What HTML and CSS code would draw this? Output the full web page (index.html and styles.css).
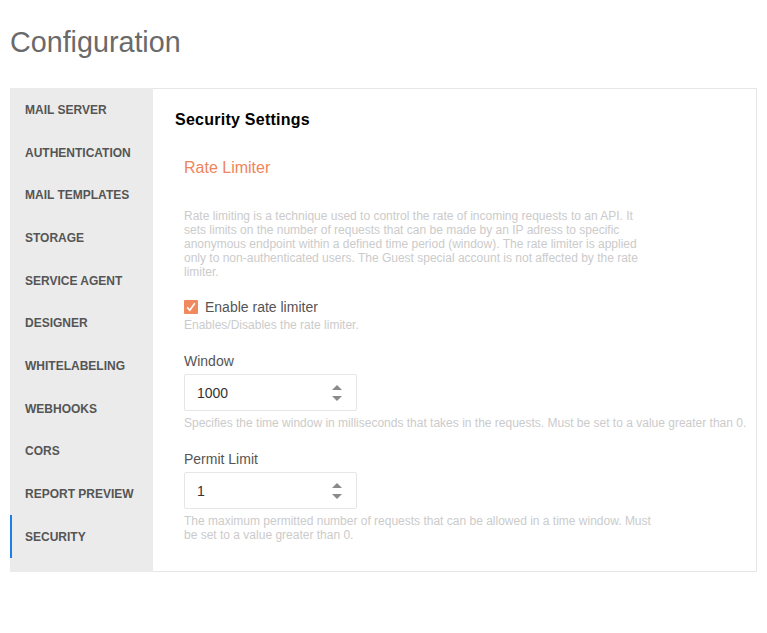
FILE: index.html
```html
<!DOCTYPE html>
<html>
<head>
<meta charset="utf-8">
<link rel="stylesheet" href="styles.css">
</head>
<body>
<h1 class="page-title">Configuration</h1>
<div class="panel">
  <nav class="sidebar">
    <div class="nav-item">MAIL SERVER</div>
    <div class="nav-item">AUTHENTICATION</div>
    <div class="nav-item">MAIL TEMPLATES</div>
    <div class="nav-item">STORAGE</div>
    <div class="nav-item">SERVICE AGENT</div>
    <div class="nav-item">DESIGNER</div>
    <div class="nav-item">WHITELABELING</div>
    <div class="nav-item">WEBHOOKS</div>
    <div class="nav-item">CORS</div>
    <div class="nav-item">REPORT PREVIEW</div>
    <div class="nav-item active">SECURITY</div>
  </nav>
  <main class="content">
    <h2 class="section-title">Security Settings</h2>
    <div class="group">
      <h3 class="group-title">Rate Limiter</h3>
      <p class="desc">Rate limiting is a technique used to control the rate of incoming requests to an API. It sets limits on the number of requests that can be made by an IP adress to specific anonymous endpoint within a defined time period (window). The rate limiter is applied only to non-authenticated users. The Guest special account is not affected by the rate limiter.</p>
      <label class="check-row">
        <svg class="checkbox" width="14" height="14" viewBox="0 0 14 14"><rect x="0" y="0" width="14" height="14" rx="1" fill="#f08a5e"/><path d="M3.2 7.4 L5.8 10.2 L10.8 3.2" fill="none" stroke="#fff" stroke-width="1.6"/></svg>
        <span class="check-label">Enable rate limiter</span>
      </label>
      <div class="help help-check">Enables/Disables the rate limiter.</div>

      <div class="field-label">Window</div>
      <div class="num-input">
        <span class="num-value">1000</span>
        <svg class="spin" width="12" height="20" viewBox="0 0 12 20"><path d="M1 7 L6 2 L11 7 Z" fill="#8a8a8a"/><path d="M1 13 L11 13 L6 18 Z" fill="#8a8a8a"/></svg>
      </div>
      <div class="help">Specifies the time window in milliseconds that takes in the requests. Must be set to a value greater than 0.</div>

      <div class="field-label">Permit Limit</div>
      <div class="num-input">
        <span class="num-value">1</span>
        <svg class="spin" width="12" height="20" viewBox="0 0 12 20"><path d="M1 7 L6 2 L11 7 Z" fill="#8a8a8a"/><path d="M1 13 L11 13 L6 18 Z" fill="#8a8a8a"/></svg>
      </div>
      <div class="help help-narrow">The maximum permitted number of requests that can be allowed in a time window. Must be set to a value greater than 0.</div>
    </div>
  </main>
</div>
</body>
</html>
```
FILE: styles.css
```css
* { box-sizing: border-box; }
body {
  margin: 0;
  padding: 0 10px;
  font-family: "Liberation Sans", Arial, sans-serif;
  background: #fff;
}
.page-title {
  margin: 26px 0 30px 0;
  font-size: 28.7px;
  font-weight: normal;
  color: #6a6a6a;
  line-height: 32px;
}
.panel {
  display: flex;
  width: 747px;
  border: 1px solid #e6e6e6;
  border-left: none;
  border-right: 1px solid #e6e6e6;
}
.sidebar {
  width: 143px;
  background: #ebebeb;
  display: flex;
  flex-direction: column;
  margin-top: -1px;
  margin-bottom: -1px;
}
.nav-item {
  height: 42.7px;
  display: flex;
  align-items: center;
  font-size: 12px;
  font-weight: bold;
  color: #555;
  border-left: 2px solid transparent;
  padding-left: 13px;
}
.nav-item:first-child { margin-top: 0.5px; }
.nav-item.active {
  border-left-color: #1a7fe6;
}
.content {
  flex: 1;
  padding: 21px 0 29px 22px;
}
.section-title {
  margin: 0;
  font-size: 16px;
  font-weight: bold;
  color: #000;
  line-height: 19px;
  letter-spacing: 0.25px;
}
.group {
  padding-left: 9px;
}
.group-title {
  margin: 29px 0 0 0;
  font-size: 16px;
  font-weight: normal;
  color: #f0845a;
  line-height: 19px;
}
.desc {
  margin: 32px 0 0 0;
  width: 470px;
  font-size: 12px;
  line-height: 14px;
  color: #cbcbcb;
}
.check-row {
  display: flex;
  align-items: center;
  gap: 7px;
  margin-top: 20px;
  height: 16px;
}
.checkbox { display: block; }
.check-label {
  font-size: 14px;
  line-height: 16px;
  color: #555;
}
.help {
  font-size: 12px;
  line-height: 14px;
  color: #cbcbcb;
  margin-top: 5px;
}
.help-check { margin-top: 3px; }
.help-narrow { width: 470px; }
.field-label {
  margin-top: 21px;
  font-size: 14px;
  line-height: 16px;
  color: #555;
  margin-bottom: 5px;
}
.num-input {
  width: 173px;
  height: 37px;
  border: 1px solid #e6e6e6;
  border-radius: 2px;
  display: flex;
  align-items: center;
  justify-content: space-between;
  padding: 0 13px 0 12px;
}
.num-value {
  font-size: 14px;
  color: #333;
}
.spin { display: block; }
```
